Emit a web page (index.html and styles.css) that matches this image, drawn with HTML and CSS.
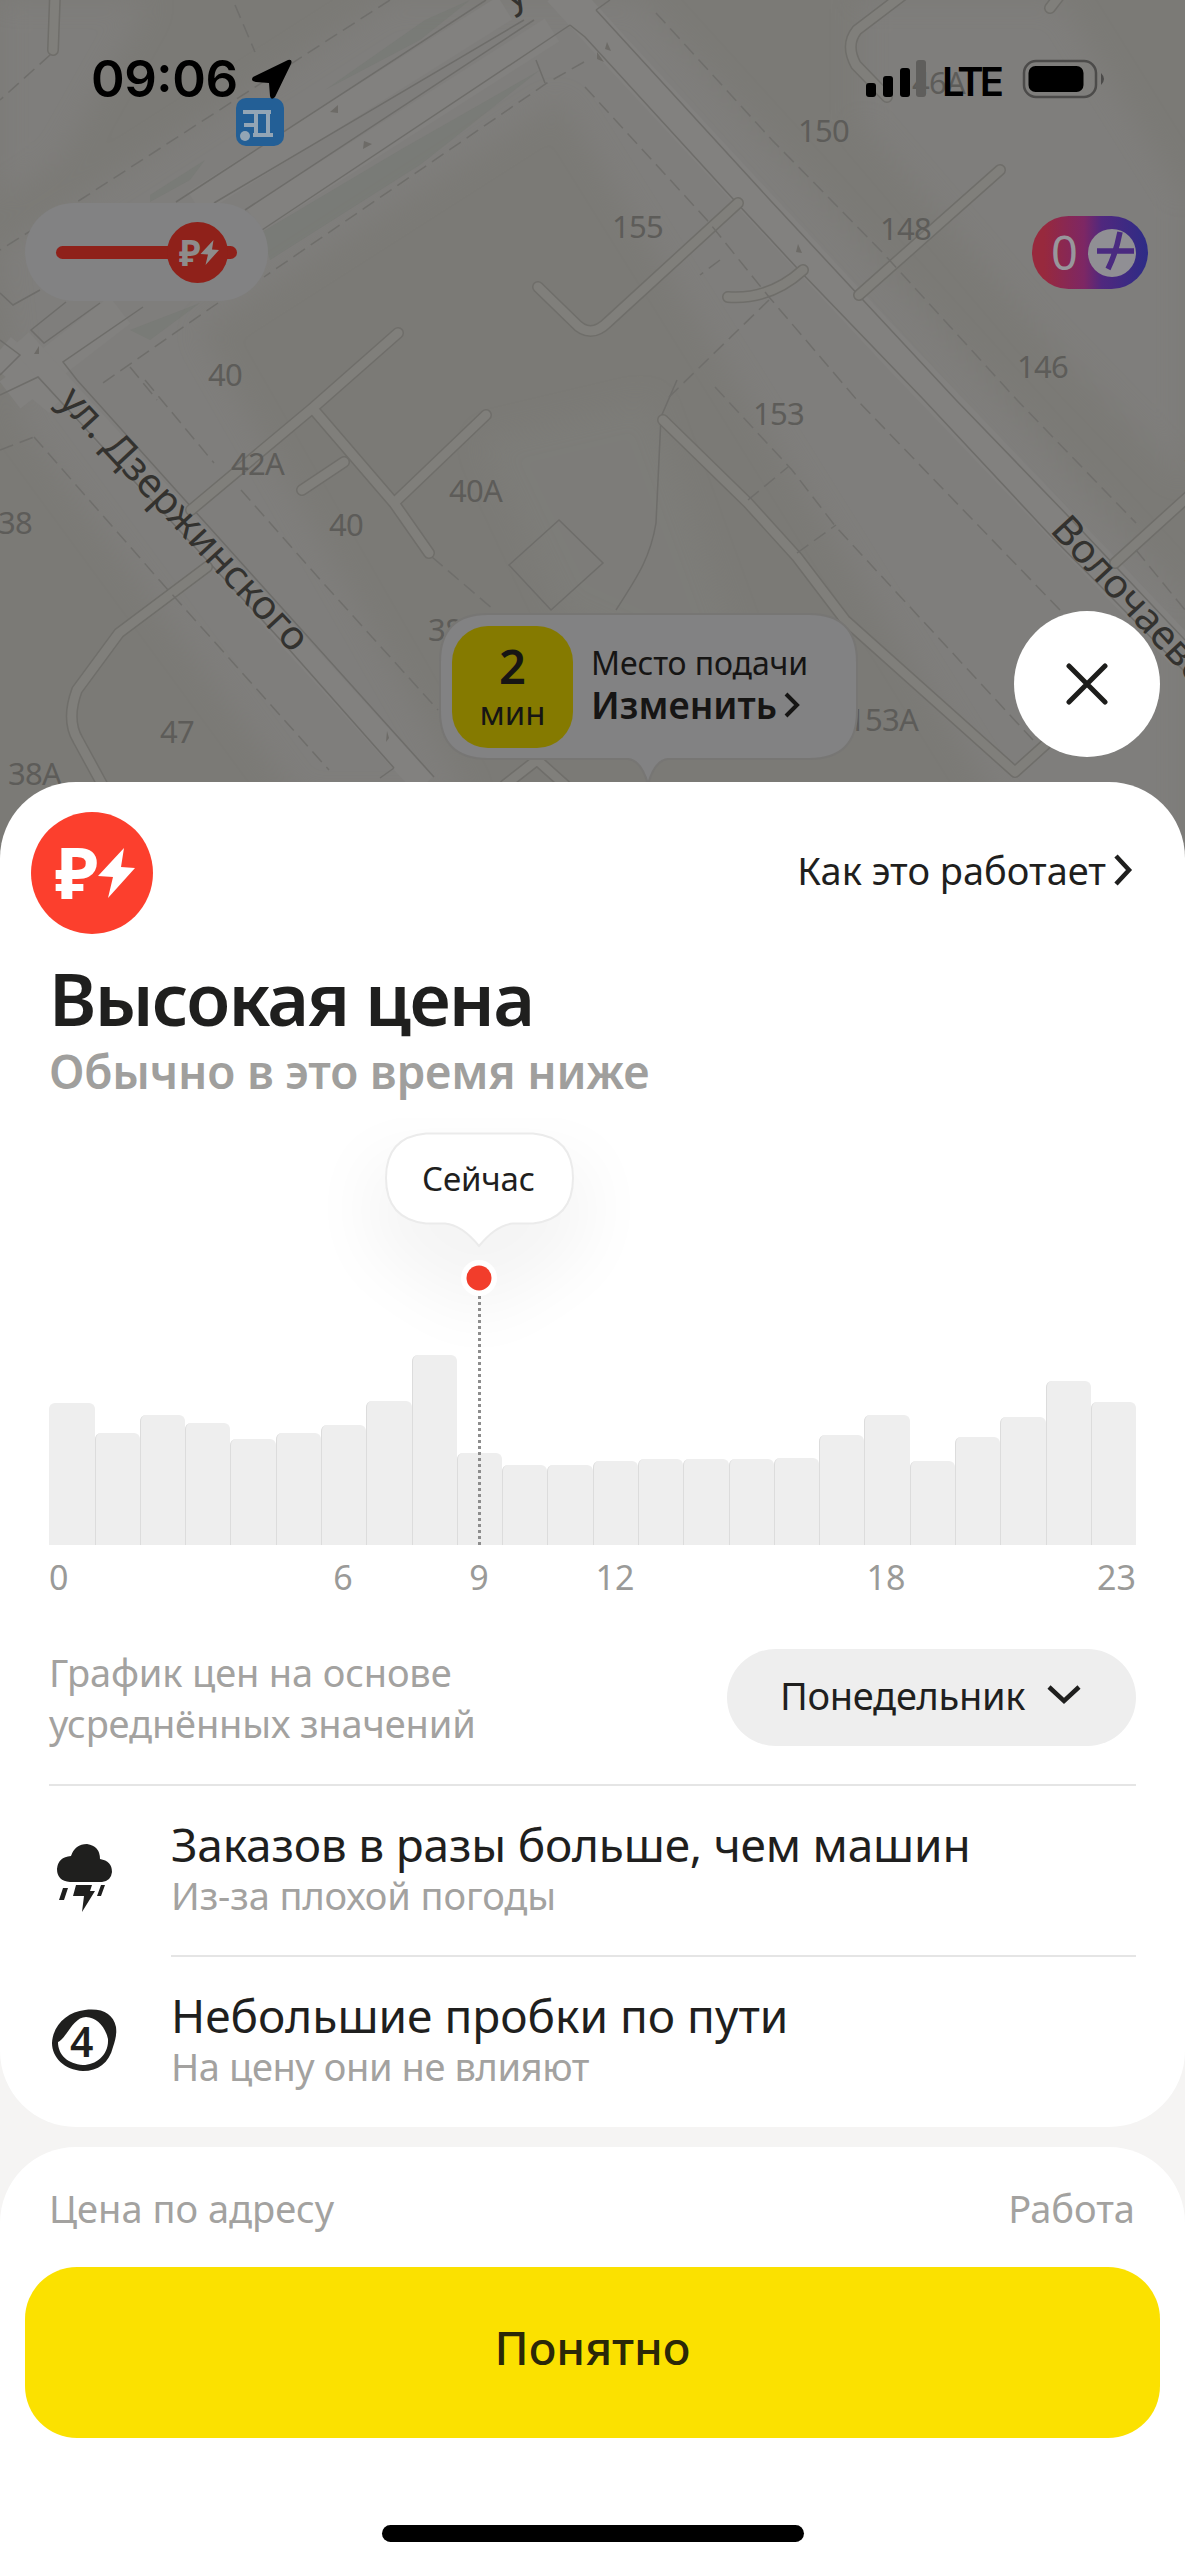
FILE: index.html
```html
<!DOCTYPE html>
<html lang="ru">
<head>
<meta charset="utf-8">
<title>Высокая цена</title>
<link rel="stylesheet" href="styles.css">
</head>
<body>
<div class="screen">
  <div class="map">
    <svg class="map-canvas" width="1185" height="900" viewBox="0 0 1185 900">
      <defs>
        <filter id="soft" x="-20%" y="-20%" width="140%" height="140%"><feGaussianBlur stdDeviation="14"/></filter>
      </defs>
      <rect width="1185" height="900" fill="#7b7a76"/>
      <g fill="#7f7e7b" filter="url(#soft)">
        <path d="M390 0H640L1185 600V900H1060L560 100 200 330 470 800H300L20 420 0 250Z"/>
        <path d="M0 0H150L60 160 0 200ZM860 0H1060L1185 200V480L1040 330 860 120Z"/>
        <path d="M480 440 650 400 760 700 560 610Z" opacity=".6"/>
      </g>
      <g fill="#737871" opacity=".5">
        <path d="M425 20 470 0 420 40 325 90ZM150 195 205 160 190 180 150 202ZM540 70 420 165 270 260 262 232 400 150ZM130 330 200 303 150 340Z"/>
      </g>
      <g class="road-fill">
        <path d="M505 8 195 203" stroke-width="27"/>
        <path d="M552 30 254 220" stroke-width="27"/>
        <path d="M120 310 10 395M0 350 60 400" stroke-width="34"/>
        <path d="M560 -10 610 45 900 357 1185 655" stroke-width="34"/>
        <path d="M20 340 60 385 424 785" stroke-width="24"/>
      </g>
      <g class="road-line">
        <path d="M486 0 176 202M524 20 214 203M534 20 245 210M570 25 543 43 262 230"/>
        <path d="M570 25 585 37 734 200 797 268 924 400 1050 535 1185 672M596 10 770 200 956 400 1069 517 1185 640M596 10 610 0"/>
        <path d="M40 290 13 305 0 293M100 303 44 343 31 330 66 302M143 307 63 362 77 380 434 777M0 340 20 355 0 375M0 395 38 377 287 647 394 768M394 768 380 778"/>
        <path d="M559 520 509 565 551 610 603 563ZM677 380 661 417 656 523C650 560 635 580 616 610M545 83 536 60"/>
      </g>
      <g class="lane-edge">
        <path d="M738 203 608 322Q590 340 574 322L538 287"/><path d="M728 297Q770 300 803 270"/><path d="M859 295 1000 170"/>
        <path d="M903 -5 857 30Q845 45 856 65L887 97"/><path d="M1050 8 1060 -5"/><path d="M55 -5 53 50"/>
        <path d="M663 420 748 503 797 557 845 620 1015 772 1045 745"/><path d="M1115 563 1190 495"/>
        <path d="M191 510 314 407 398 333M314 410 394 503 429 553M394 503 486 415M344 462 302 490"/>
        <path d="M207 567 119 633 77 690Q66 720 78 740L108 795"/><path d="M505 785 537 760 565 785"/>
      </g>
      <g class="lane-fill">
        <path d="M738 203 608 322Q590 340 574 322L538 287"/><path d="M728 297Q770 300 803 270"/><path d="M859 295 1000 170"/>
        <path d="M903 -5 857 30Q845 45 856 65L887 97"/><path d="M1050 8 1060 -5"/><path d="M55 -5 53 50"/>
        <path d="M663 420 748 503 797 557 845 620 1015 772 1045 745"/><path d="M1115 563 1190 495"/>
        <path d="M191 510 314 407 398 333M314 410 394 503 429 553M394 503 486 415M344 462 302 490"/>
        <path d="M207 567 119 633 77 690Q66 720 78 740L108 795"/><path d="M505 785 537 760 565 785"/>
      </g>
      <g class="path-line">
        <path d="M390 0 80 200 0 250M584 62 547 83 264 277M218 303 100 385M50 55 0 100M235 5 255 52"/>
        <path d="M656 13 772 140 883 253 1017 400 1136 523M585 87 707 220 769 297 857 400 1060 610M769 300 669 397"/>
        <path d="M34 437 161 582 329 770M145 380 214 463M241 490 325 585 438 710M432 557 494 610M130 367 157 400M0 450 34 437"/>
        <path d="M715 387 792 470 836 527 1033 740M748 500 788 467M797 553 836 525M1136 550 1185 610M720 260 700 275"/>
      </g>
      <g fill="#6d6b67">
        <path d="m330 112 8-7v8ZM372 144l-9 5 1-8ZM607 42l4 9-6-2ZM597 52l7 10-7-3ZM798 244l4 9-6-1ZM34 354l5-8v8ZM386 742l1-11 2 7Z"/>
      </g>
      <g class="house">
        <text x="798" y="142">150</text><text x="612" y="238">155</text><text x="880" y="240">148</text>
        <text x="1017" y="378">146</text><text x="753" y="425">153</text><text x="208" y="386">40</text>
        <text x="231" y="475">42А</text><text x="329" y="536">40</text><text x="449" y="502">40А</text>
        <text x="-2" y="534">38</text><text x="428" y="641">38</text><text x="160" y="743">47</text><text x="8" y="785">38А</text>
        <text x="848" y="731">153А</text><text x="-12" y="665">1</text><text x="1182" y="478">1</text>
        <text x="912" y="94">46А</text>
      </g>
      <g class="street">
        <text transform="translate(57 402) rotate(47)" textLength="345" lengthAdjust="spacingAndGlyphs">ул. Дзержинского</text>
        <text transform="translate(1049 531) rotate(47)" textLength="276" lengthAdjust="spacingAndGlyphs">Волочаевская</text>
        <text transform="translate(511 10) rotate(-30)">у</text>
      </g>
      <g class="metro">
        <rect x="236" y="98" width="48" height="48" rx="10" fill="#235f96"/>
        <path d="M243 112h28M256 112v22M268 112v22M253 135h20M244 125h12" fill="none" stroke="#93a5b5" stroke-width="4"/>
        <circle cx="245" cy="136" r="5" fill="#93a5b5"/>
      </g>
      <path d="M488 614H809Q857 614 857 662V711Q857 759 809 759H668Q655 760 648 784 641 760 628 759H488Q440 759 440 711V662Q440 614 488 614Z" fill="#828283" stroke="#777674" stroke-width="2"/>
    </svg>

    <svg class="status" width="1185" height="110" viewBox="0 0 1185 110">
      <text class="clock" x="91" y="97" textLength="147">09:06</text>
      <path d="M253 77 288 60Q293 59 291 64L275 97Q271 101 270 96L269 83 256 82Q250 81 253 77Z"/>
      <rect x="866" y="83" width="10" height="14" rx="3"/><rect x="883" y="76" width="10" height="21" rx="3"/>
      <rect x="900" y="68" width="10" height="29" rx="3"/><rect x="916" y="60" width="10" height="37" rx="3" fill="#5f5e5c"/>
      <text class="net" x="942" y="96" textLength="62">LTE</text>
      <rect x="1024" y="61" width="72" height="36" rx="12" fill="none" stroke="#4c4b4a" stroke-width="2.5"/>
      <rect x="1028.500" y="66" width="55" height="26" rx="7"/><path d="M1101 73q6 6 0 12Z" fill="#4c4b4a"/>
    </svg>

    <div class="surge">
      <div class="surge-track"></div>
      <svg class="surge-knob" viewBox="0 0 122 122">
        <circle cx="61" cy="61" r="61" fill="#8f211a"/>
        <g fill="#8e8c8b"><text class="rub" x="24" y="87" textLength="43" lengthAdjust="spacingAndGlyphs">₽</text><path d="M93 36 67 64 82 65 77 86 104 56 90 55Z"/></g>
      </svg>
    </div>

    <div class="plus">
      <span>0</span>
      <svg width="48" height="48" viewBox="0 0 48 48"><circle cx="24" cy="24" r="24" fill="#908f94"/><path d="M9 22H46M32 3Q28 24 20 40" fill="none" stroke="#4a2a80" stroke-width="5.500"/></svg>
    </div>

    <div class="pickup">
      <div class="eta"><b>2</b><span>мин</span></div>
      <div class="pickup-text">
        <div class="pickup-label">Место подачи</div>
        <div class="pickup-edit">Изменить
          <svg width="18" height="28" viewBox="0 0 18 28"><path d="M3 3 14 14 3 25" fill="none" stroke="#161514" stroke-width="4"/></svg></div>
      </div>
    </div>

    <button class="close" aria-label="Закрыть">
      <svg width="42" height="42" viewBox="0 0 42 42"><path d="M3 3 39 39M39 3 3 39" stroke="#1d1d1b" stroke-width="5" stroke-linecap="round"/></svg>
    </button>
  </div>

  <main class="sheet">
    <div class="top">
      <svg width="122" height="122" viewBox="0 0 122 122">
        <circle cx="61" cy="61" r="61" fill="#fc3f2d"/>
        <g fill="#fff"><text class="rub" x="24" y="87" textLength="43" lengthAdjust="spacingAndGlyphs">₽</text><path d="M93 36 67 64 82 65 77 86 104 56 90 55Z"/></g>
      </svg>
      <a class="how">Как это работает
        <svg width="20" height="34" viewBox="0 0 20 34"><path d="M3 3 16 17 3 31" fill="none" stroke="#1f1f1e" stroke-width="4.500"/></svg></a>
    </div>
    <h1>Высокая цена</h1>
    <p class="lead">Обычно в это время ниже</p>

    <div class="chart">
      <div class="bars">
        <i style="height:142px"></i><i style="height:112px"></i><i style="height:130px"></i><i style="height:122px"></i>
        <i style="height:106px"></i><i style="height:112px"></i><i style="height:120px"></i><i style="height:144px"></i>
        <i style="height:190px"></i><i style="height:92px"></i><i style="height:80px"></i><i style="height:80px"></i>
        <i style="height:84px"></i><i style="height:86px"></i><i style="height:86px"></i><i style="height:86px"></i>
        <i style="height:87px"></i><i style="height:110px"></i><i style="height:130px"></i><i style="height:84px"></i>
        <i style="height:108px"></i><i style="height:128px"></i><i style="height:164px"></i><i style="height:143px"></i>
      </div>
      <div class="now">
        <svg width="400" height="430" viewBox="0 0 400 430">
          <defs><filter id="glow" x="-60%" y="-60%" width="220%" height="260%"><feGaussianBlur stdDeviation="34"/></filter></defs>
          <path d="M90 40H310V130L200 200 90 130Z" fill="#000" opacity=".04" filter="url(#glow)"/>
          <path d="M147 15.500H254Q294 19 294 60 294 101 254 105.500H234Q217 107 200 128 183 107 166 105.500H147Q107 101 107 60 107 19 147 15.500Z" fill="#fff" stroke="#ebebeb" stroke-width="2"/>
          <text x="143" y="73" textLength="113">Сейчас</text>
          <circle cx="200" cy="160" r="18" fill="#fff"/><circle cx="200" cy="160" r="12.500" fill="#f23d2b"/>
          <path d="M200.500 178V427" stroke="#8d8d8d" stroke-width="3" stroke-dasharray="3 3"/>
        </svg>
      </div>
    </div>
    <div class="axis"><span>0</span><span>6</span><span>9</span><span>12</span><span>18</span><span>23</span></div>

    <div class="note">
      <p>График цен на основе<br>усреднённых значений</p>
      <button class="day">Понедельник
        <svg width="34" height="20" viewBox="0 0 34 20"><path d="M2 2 17 16 32 2" fill="none" stroke="#1f1f1e" stroke-width="4.500"/></svg></button>
    </div>

    <div class="reason">
      <svg width="68" height="76" viewBox="0 0 68 76" fill="#1f1f1e">
        <path d="M21 42Q8 41 8 29 9 17 22 16 26 4 38 4 51 6 51 19 63 21 63 32 62 41 53 42Z"/>
        <path d="M27 45H43L41 51H46L33 72 35 56H24ZM14 48H19L15 60H10ZM52 45H56L52 56H48Z"/>
      </svg>
      <div class="reason-text">
        <h2>Заказов в разы больше, чем машин</h2>
        <p>Из-за плохой погоды</p>
      </div>
    </div>
    <div class="reason">
      <svg width="68" height="76" viewBox="0 0 68 76">
        <path fill="#1f1f1e" fill-rule="evenodd" d="M36 5C54 3 64 9 67 22 68 30 66 36 64 42 60 58 49 66 34 66 15 65 3 52 3 38 4 20 18 7 36 5ZM37 12C48 13 56 21 59 34 60 50 47 60 34 60 19 59 9 50 9 37 17 34 24 12 37 12Z"/>
        <text class="score" x="21" y="52">4</text>
      </svg>
      <div class="reason-text">
        <h2>Небольшие пробки по пути</h2>
        <p>На цену они не влияют</p>
      </div>
    </div>
  </main>

  <footer class="sheet footer">
    <div class="address"><span>Цена по адресу</span><span>Работа</span></div>
    <button class="ok">Понятно</button>
    <div class="home"></div>
  </footer>
</div>
</body>
</html>
```
FILE: styles.css
```css
* { box-sizing: border-box; }
body { margin: 0; font-family: "Noto Sans", "Open Sans", sans-serif; color: #1f1f1e; background: #f5f4f3; }
button { border: 0; padding: 0; font: inherit; color: inherit; }
h1, h2, p { margin: 0; }
svg { display: block; flex: none; }

.screen { position: relative; width: 1185px; height: 2566px; overflow: hidden; display: flex; flex-direction: column; }

/* Dimmed map behind the sheet */
.map { position: relative; height: 782px; flex: none; }
.map-canvas { position: absolute; left: 0; top: 0; }
.road-fill { fill: none; stroke: #82817f; }
.road-line { fill: none; stroke: #6e6d6a; stroke-width: 1.5; }
.lane-edge { fill: none; stroke: #6f6e6a; stroke-width: 12; stroke-linecap: round; stroke-linejoin: round; }
.lane-fill { fill: none; stroke: #807f7b; stroke-width: 9; stroke-linecap: round; stroke-linejoin: round; }
.path-line { fill: none; stroke: #6f6e6b; stroke-width: 1.5; stroke-dasharray: 14 7; }
.house { font-size: 31px; fill: #5d5c59; letter-spacing: -0.7px; }
.street { font-size: 40px; fill: #33322f; }

.status { position: absolute; left: 0; top: 0; font-family: Inter, sans-serif; }
.clock { font-size: 51px; font-weight: 600; }
.net { font-size: 40px; font-weight: 600; }

.surge { position: absolute; left: 25px; top: 203px; width: 243px; height: 98px; padding: 0 31px; border-radius: 49px; background: #828283; display: flex; align-items: center; }
.surge-track { width: 181px; height: 13px; flex: none; border-radius: 7px; background: #8f211a; }
.surge-knob { width: 61px; height: 61px; margin-left: -70px; }
.rub { font-weight: 700; font-size: 72px; }

.plus { position: absolute; left: 1032px; top: 216px; width: 116px; height: 73px; padding: 0 12px 0 19px; border-radius: 37px; background: linear-gradient(90deg, #98293d 10%, #7d2764 45%, #50287e 60%, #2d2c86); display: flex; align-items: center; justify-content: space-between; color: #98979c; font-size: 47px; line-height: 73px; }

.pickup { position: absolute; left: 440px; top: 614px; width: 417px; height: 145px; padding: 12px; display: flex; color: #161514; }
.eta { width: 121px; height: 122px; flex: none; border-radius: 36px; background: #857a00; display: flex; flex-direction: column; align-items: center; padding-top: 10px; }
.eta b { font-size: 47px; font-weight: 600; line-height: 60px; }
.eta span { font-size: 33px; line-height: 34px; }
.pickup-text { padding: 15px 0 0 18px; white-space: nowrap; }
.pickup-label { font-size: 32px; line-height: 44px; letter-spacing: -0.1px; }
.pickup-edit { font-size: 37px; font-weight: 600; line-height: 40px; letter-spacing: 0; display: flex; align-items: center; gap: 6px; }

.close { position: absolute; left: 1014px; top: 611px; width: 146px; height: 146px; border-radius: 50%; background: #fff; display: flex; align-items: center; justify-content: center; }

/* Price sheet */
.sheet { position: relative; flex: none; height: 1345px; padding: 30px 49px 0; border-radius: 76px; background: #fff; }
.top { height: 122px; margin-left: -18px; display: flex; justify-content: space-between; align-items: center; }
.how { display: flex; align-items: center; gap: 7px; margin: -6px 3px 0 0; font-size: 38px; }
h1 { margin-top: 24px; font-size: 72px; line-height: 80px; font-weight: 600; letter-spacing: -1.75px; }
.lead { margin-top: 5px; margin-bottom: -1px; font-size: 46px; line-height: 56px; font-weight: 600; letter-spacing: -0.2px; color: #a09f9d; }

.chart { position: relative; height: 447px; display: flex; align-items: flex-end; }
.bars { flex: 1; display: flex; align-items: flex-end; }
.bars i { flex: 1; background: #eee; border-left: 1px solid #dcdcdc; border-radius: 6px 6px 0 0; }
.bars i:first-child { flex: 1.03; border-left: 0; }
.now { position: absolute; left: 230px; top: 20px; }
.now text { font-size: 33px; fill: #1f1f1e; }
.axis { margin-top: 7px; display: grid; grid-template-columns: 226px 136px 136px 136px 406px 47px; font-size: 34px; line-height: 50px; color: #9a9a98; }
.axis span:nth-child(n+2) { text-align: center; }
.axis span:last-child { text-align: right; }

.note { margin-top: 45px; display: flex; justify-content: space-between; align-items: center; font-size: 38px; }
.note p { line-height: 51px; letter-spacing: -0.15px; color: #a3a2a0; }
.day { width: 409px; height: 97px; margin-top: -2px; border-radius: 49px; background: #eee; display: flex; align-items: center; padding: 0 0 4px 53px; gap: 22px; font-size: 38px; letter-spacing: -0.3px; }

.reason { display: flex; gap: 54px; padding-top: 30px; }
.note + .reason { margin-top: 35px; border-top: 2px solid #e5e5e5; }
.reason svg { margin-top: 18px; }
.note + .reason svg { margin-top: 24px; }
.reason-text { flex: 1; padding-bottom: 36px; }
.note + .reason .reason-text { border-bottom: 2px solid #e5e5e5; }
.note + .reason h2 { letter-spacing: -0.2px; }
.reason h2 { font-size: 46px; line-height: 56px; font-weight: 400; }
.reason p { margin-top: -1px; font-size: 38px; line-height: 48px; letter-spacing: -0.1px; color: #a3a2a0; }
.reason:last-child p { letter-spacing: -0.4px; }
.score { font-size: 41px; font-weight: 600; fill: #1f1f1e; }

/* Address and confirmation */
.footer { margin-top: 20px; height: 419px; border-radius: 76px 76px 0 0; padding: 36px 25px 0; }
.address { padding: 0 25px 0 24px; display: flex; justify-content: space-between; font-size: 38px; line-height: 50px; color: #a3a2a0; }
.ok { display: block; width: 1135px; height: 171px; margin-top: 34px; padding-bottom: 12px; border-radius: 52px; background: #fbe100; font-size: 46px; font-weight: 500; color: #2b2808; }
.home { width: 422px; height: 17px; margin: 87px auto 0; border-radius: 9px; background: #000; }
```
